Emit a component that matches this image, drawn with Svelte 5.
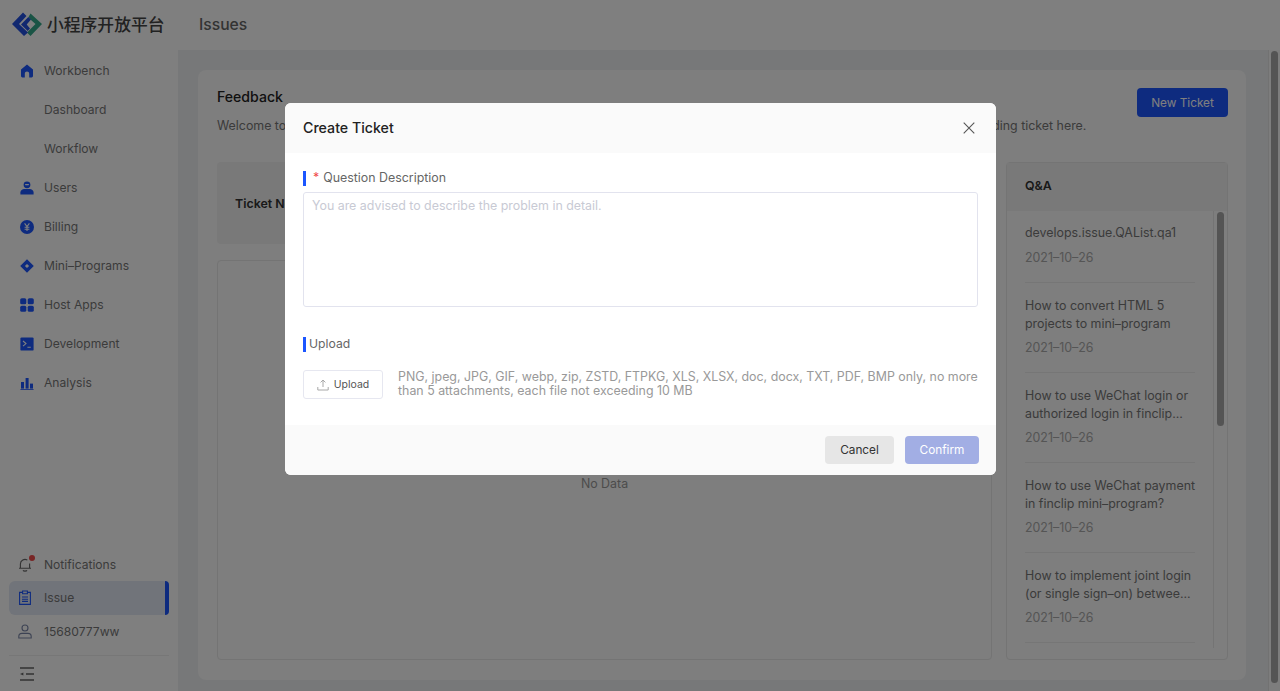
<script>
	const navTop = [
		{ label: 'Workbench', icon: 'home' },
		{ label: 'Dashboard' },
		{ label: 'Workflow' },
		{ label: 'Users', icon: 'user' },
		{ label: 'Billing', icon: 'yen' },
		{ label: 'Mini–Programs', icon: 'diamond' },
		{ label: 'Host Apps', icon: 'grid' },
		{ label: 'Development', icon: 'terminal' },
		{ label: 'Analysis', icon: 'bars' }
	];

	const questions = [
		{ title: 'develops.issue.QAList.qa1', date: '2021–10–26' },
		{ title: 'How to convert HTML 5 projects to mini–program', date: '2021–10–26' },
		{ title: 'How to use WeChat login or authorized login in finclip...', date: '2021–10–26' },
		{ title: 'How to use WeChat payment in finclip mini–program?', date: '2021–10–26' },
		{ title: 'How to implement joint login (or single sign–on) betwee...', date: '2021–10–26' }
	];
</script>

{#snippet navIcon(name)}
	<svg class="nav-icon" viewBox="0 0 14 14" aria-hidden="true">
		{#if name === 'home'}
			<path d="M7 .6 13 5.4V12a1.4 1.4 0 0 1-1.4 1.4H9.2V9.6a2.2 2.2 0 0 0-4.4 0v3.8H2.4A1.4 1.4 0 0 1 1 12V5.4z" />
		{:else if name === 'user'}
			<path d="M7 .4a3.4 3.4 0 0 1 3.4 3.4A3.4 3.4 0 0 1 7 7.2a3.4 3.4 0 0 1-3.4-3.4A3.4 3.4 0 0 1 7 .4z" />
			<path d="M.4 13.6v-2.2C.4 9.4 2.4 8 4.2 8h5.6c1.8 0 3.8 1.4 3.8 3.4v2.2z" />
			<rect x="5" y="3" width="4" height="1.2" rx=".6" class="cut" />
		{:else if name === 'yen'}
			<circle cx="7" cy="7" r="7" />
			<path d="M4.6 3.4 7 6.6l2.4-3.2M4.6 7.2h4.8M4.6 9.2h4.8M7 6.6v4.4" class="cut-line" />
		{:else if name === 'diamond'}
			<path fill-rule="evenodd" d="M7 .2 13.8 7 7 13.8.2 7zM7 4.9 4.9 7 7 9.1 9.1 7z" />
		{:else if name === 'grid'}
			<rect x=".2" y=".2" width="6.1" height="6.1" rx="1.6" />
			<rect x="7.7" y=".2" width="6.1" height="6.1" rx="1.6" />
			<rect x=".2" y="7.7" width="6.1" height="6.1" rx="1.6" />
			<rect x="7.7" y="7.7" width="6.1" height="6.1" rx="1.6" />
		{:else if name === 'terminal'}
			<rect x=".4" y=".4" width="13.2" height="13.2" rx="1.2" />
			<path d="M3 4l3 2.6L3 9.2M7.4 10.2h3.4" class="cut-line" />
		{:else if name === 'bars'}
			<rect x="1" y="6" width="3" height="6.6" />
			<rect x="5.6" y="2" width="3" height="10.6" />
			<rect x="10" y="7.6" width="3" height="5" />
			<rect x=".4" y="13" width="13.2" height=".8" />
		{/if}
	</svg>
{/snippet}

<div class="page">
	<aside class="sidebar">
		<div class="logo">
			<svg width="31" height="26" viewBox="0 0 31 26" aria-hidden="true">
				<path fill="#34a88a" d="M18.5 2.5 30 13 18.5 25l-3.5-3.5 8.5-8.5-4.5-4-2.5-3z" />
				<path fill="#2350e0" d="M0 13 11 1.5 14.5 5 7 13l9 8.5-4 3.5z" />
				<path fill="#2350e0" d="M9 13.5 16.3 6 19 8.5 14.7 13.5l3.3 4-2.3 2.5z" />
			</svg>
			<span class="logo-text">小程序开放平台</span>
		</div>

		<nav class="nav">
			{#each navTop as item}
				<div class="nav-row">
					{#if item.icon}
						{@render navIcon(item.icon)}
					{:else}
						<span class="nav-icon"></span>
					{/if}
					<span>{item.label}</span>
				</div>
			{/each}
		</nav>

		<div class="nav-bottom">
			<div class="nav-row small">
				<span class="bell">
					<svg class="nav-icon line" viewBox="0 0 14 15" aria-hidden="true">
						<path d="M1 11.2h12M2.4 11.2V7a4.6 4.6 0 0 1 7-3.9M11.6 6.6v4.6M5 13.4c.6.9 3.4.9 4 0" />
					</svg>
					<i class="dot"></i>
				</span>
				<span>Notifications</span>
			</div>
			<div class="nav-row small active">
				<svg class="nav-icon line blue" viewBox="0 0 14 15" aria-hidden="true">
					<path d="M4.4 2.4H1.6v12h10.8v-12H9.6M4.6 1h4.8v2.8H4.6zM4 7h6M4 9.2h6M4 11.4h6" />
				</svg>
				<span>Issue</span>
			</div>
			<div class="nav-row small">
				<svg class="nav-icon line slate" viewBox="0 0 14 15" aria-hidden="true">
					<circle cx="7" cy="4" r="3" />
					<path d="M.8 14v-1.6C.8 10.4 2.4 9.4 4 9.4h6c1.6 0 3.2 1 3.2 3V14z" />
				</svg>
				<span>15680777ww</span>
			</div>
			<div class="collapse">
				<svg width="16" height="14" viewBox="0 0 16 14" aria-hidden="true">
					<path d="M1 1h14M7 7h8M1 13h14" stroke="#666" stroke-width="1.5" fill="none" />
					<path d="M1 7 4.4 5.4v3z" fill="#666" />
				</svg>
			</div>
		</div>
	</aside>

	<div class="content">
		<header class="topbar">Issues</header>
		<div class="body">
			<main class="main">
				<section class="card">
					<div class="card-head">
						<div>
							<h2>Feedback</h2>
							<p>Welcome to the Feedback center. If you meet any problems while using the platform, you can submit a ticket and view the corresponding ticket here.</p>
						</div>
						<button class="primary">New Ticket</button>
					</div>
					<div class="columns">
						<div class="tickets">
							<div class="table-head">Ticket No.</div>
							<div class="table-empty">No Data</div>
						</div>
						<div class="qa">
							<div class="qa-head">Q&amp;A</div>
							<div class="qa-list">
								<div class="qa-items">
									{#each questions as q}
										<div class="qa-item">
											<div class="qa-title">{q.title}</div>
											<div class="qa-date">{q.date}</div>
										</div>
									{/each}
								</div>
								<div class="qa-scroll"><span></span></div>
							</div>
						</div>
					</div>
				</section>
			</main>
			<div class="page-scroll"><span></span></div>
		</div>
	</div>

	<div class="overlay"></div>

	<div class="modal">
		<div class="modal-head">
			<span>Create Ticket</span>
			<svg width="12" height="12" viewBox="0 0 12 12" aria-hidden="true">
				<path d="M.7.7l10.6 10.6M11.3.7.7 11.3" stroke="#555" stroke-width="1.1" fill="none" />
			</svg>
		</div>
		<div class="modal-body">
			<div class="field-label first"><i class="mark"></i><b>*</b>Question Description</div>
			<div class="textarea">You are advised to describe the problem in detail.</div>
			<div class="field-label second"><i class="mark"></i>Upload</div>
			<div class="upload-row">
				<button class="upload">
					<svg width="12" height="12" viewBox="0 0 12 12" aria-hidden="true">
						<path d="M6 8V1.2M3.6 3.4 6 1l2.4 2.4M.8 8v3h10.4V8" stroke="#a8a8a8" fill="none" />
					</svg>
					Upload
				</button>
				<p>PNG, jpeg, JPG, GIF, webp, zip, ZSTD, FTPKG, XLS, XLSX, doc, docx, TXT, PDF, BMP only, no more than 5 attachments, each file not exceeding 10 MB</p>
			</div>
		</div>
		<div class="modal-foot">
			<button class="cancel">Cancel</button>
			<button class="confirm">Confirm</button>
		</div>
	</div>
</div>

<style>
	:global(body) {
		margin: 0;
		overflow: hidden;
	}

	.page {
		position: relative;
		display: flex;
		width: 1280px;
		height: 691px;
		overflow: hidden;
		font-family: Inter, 'Noto Sans CJK SC', sans-serif;
		font-size: 12.4px;
		color: #666;
		background: #fff;
	}

	.sidebar {
		width: 178px;
		flex: none;
		display: flex;
		flex-direction: column;
		box-sizing: border-box;
		padding: 0 9px;
	}

	.logo {
		height: 51px;
		flex: none;
		box-sizing: border-box;
		padding-bottom: 3px;
		display: flex;
		align-items: center;
		gap: 4px;
		margin: 0 0 0 3px;
	}

	.logo-text {
		font-family: 'Noto Sans CJK SC', sans-serif;
		font-size: 16.8px;
		font-weight: 500;
		color: #444;
		white-space: nowrap;
	}

	.nav-row {
		height: 39px;
		display: flex;
		align-items: center;
		gap: 10px;
		padding-left: 11px;
		font-size: 12.1px;
		color: #777;
	}

	.nav-row.small {
		height: 33.5px;
		padding-left: 9px;
		gap: 12px;
		position: relative;
	}

	.nav-icon {
		width: 14px;
		height: 14px;
		flex: none;
		fill: #1c56ff;
	}

	.cut {
		fill: #fff;
	}

	.cut-line {
		fill: none;
		stroke: #fff;
		stroke-width: 1.1;
	}

	.nav-icon.line {
		width: 14px;
		height: 15px;
		fill: none;
		stroke: #666;
		stroke-width: 1.1;
	}

	.nav-icon.blue {
		stroke: #1c56ff;
	}

	.nav-icon.slate {
		stroke: #7a86a8;
	}

	.bell {
		position: relative;
		display: flex;
	}

	.dot {
		position: absolute;
		top: -2px;
		right: -3px;
		width: 6px;
		height: 6px;
		border-radius: 50%;
		background: #f04a4a;
	}

	.nav-bottom {
		margin-top: auto;
	}

	.active {
		background: #e3e8f4;
		border-radius: 6px;
	}

	.active::after {
		content: '';
		position: absolute;
		top: 0;
		right: 0;
		bottom: 0;
		width: 4px;
		background: #1c56ff;
		border-radius: 0 4px 4px 0;
	}

	.collapse {
		margin-top: 7px;
		border-top: 1px solid #eee;
		height: 36px;
		display: flex;
		align-items: center;
		padding-left: 10px;
		box-sizing: border-box;
	}

	.content {
		flex: 1;
		display: flex;
		flex-direction: column;
		min-width: 0;
	}

	.topbar {
		height: 50px;
		flex: none;
		display: flex;
		align-items: center;
		padding: 0 0 2px 21px;
		font-size: 15.7px;
		font-weight: 500;
		color: #666;
		box-sizing: border-box;
	}

	.body {
		flex: 1;
		display: flex;
		min-height: 0;
	}

	.main {
		flex: 1;
		min-width: 0;
		background: #eef0f2;
		padding: 20px 22px 11px 20px;
	}

	.page-scroll {
		width: 12px;
		flex: none;
		box-sizing: border-box;
		border-left: 1px solid #e4e4e4;
		background: #fafafa;
		padding: 1px 2px 8px 2px;
		display: flex;
	}

	.page-scroll span {
		flex: 1;
		background: #a8a8a8;
		border-radius: 4px;
	}

	.card {
		height: 100%;
		box-sizing: border-box;
		background: #fcfcfc;
		border-radius: 8px;
		padding: 18px 18px 20px 19px;
		display: flex;
		flex-direction: column;
	}

	.card-head {
		display: flex;
		justify-content: space-between;
		align-items: flex-start;
		height: 74px;
		flex: none;
	}

	.card-head h2 {
		margin: 0;
		font-size: 14.1px;
		line-height: 18px;
		font-weight: 500;
		color: #222;
	}

	.card-head p {
		margin: 11px 0 0;
		line-height: 18px;
		white-space: nowrap;
		color: #777;
	}

	.primary {
		width: 91px;
		height: 29px;
		flex: none;
		border: 0;
		border-radius: 4px;
		background: #1c56ff;
		color: #fff;
		font: inherit;
		font-size: 11.8px;
	}

	.columns {
		flex: 1;
		display: flex;
		gap: 14px;
		min-height: 0;
	}

	.tickets {
		width: 775px;
		flex: none;
		display: flex;
		flex-direction: column;
		gap: 16px;
	}

	.table-head {
		height: 82px;
		flex: none;
		box-sizing: border-box;
		display: flex;
		align-items: center;
		padding-left: 18px;
		background: #f3f3f3;
		border-radius: 4px;
		font-weight: 600;
		color: #333;
	}

	.table-empty {
		flex: 1;
		border: 1px solid #e8e8e8;
		border-radius: 4px;
		box-sizing: border-box;
		display: flex;
		justify-content: center;
		padding-top: 215px;
		color: #999;
	}

	.qa {
		flex: 1;
		min-width: 0;
		border: 1px solid #e8e8e8;
		border-radius: 4px;
		display: flex;
		flex-direction: column;
	}

	.qa-head {
		height: 48px;
		flex: none;
		box-sizing: border-box;
		display: flex;
		align-items: center;
		padding: 0 0 4px 18px;
		background: #f3f3f3;
		font-weight: 600;
		color: #333;
	}

	.qa-list {
		height: 437px;
		flex: none;
		display: flex;
		overflow: hidden;
	}

	.qa-items {
		flex: 1;
		min-width: 0;
		padding: 0 18px;
	}

	.qa-item {
		padding: 14px 0 15px;
		border-bottom: 1px solid #ececec;
	}

	.qa-item:first-child {
		padding-top: 13px;
	}

	.qa-item:first-child .qa-date {
		margin-top: 7px;
	}

	.qa-title {
		margin-right: -6px;
		line-height: 18px;
		color: #777;
	}

	.qa-date {
		margin-top: 6px;
		line-height: 18px;
		color: #aaa;
	}

	.qa-scroll {
		width: 14px;
		flex: none;
		box-sizing: border-box;
		border-left: 1px solid #e8e8e8;
		padding: 1px 3px 0;
	}

	.qa-scroll span {
		display: block;
		height: 214px;
		background: #a8a8a8;
		border-radius: 4px;
	}

	.overlay {
		position: absolute;
		inset: 0;
		background: rgba(0, 0, 0, 0.5);
	}

	.modal {
		position: absolute;
		top: 103px;
		left: 285px;
		width: 711px;
		height: 372px;
		background: #fff;
		border-radius: 6px;
		overflow: hidden;
		display: flex;
		flex-direction: column;
	}

	.modal-head {
		height: 50px;
		flex: none;
		box-sizing: border-box;
		display: flex;
		align-items: center;
		justify-content: space-between;
		padding: 0 21px 1px 18px;
		background: #fafafa;
		font-size: 14.2px;
		font-weight: 500;
		color: #222;
	}

	.modal-body {
		flex: 1;
		padding: 0 18px;
	}

	.field-label {
		display: flex;
		align-items: center;
		color: #666;
		line-height: 16px;
	}

	.field-label.first {
		margin-top: 17px;
	}

	.field-label.second {
		margin-top: 29px;
		font-size: 12.2px;
	}

	.mark {
		width: 3px;
		height: 15px;
		background: #1c56ff;
		margin-right: 3px;
	}

	.field-label b {
		font-weight: 400;
		color: #f04a4a;
		margin: 0 4px;
	}

	.textarea {
		margin-top: 6px;
		height: 115px;
		box-sizing: border-box;
		border: 1px solid #e2e3ee;
		border-radius: 3px;
		padding: 4px 8px;
		line-height: 18px;
		color: #c8cad4;
	}

	.upload-row {
		margin-top: 18px;
		display: flex;
		gap: 15px;
	}

	.upload {
		width: 80px;
		height: 29px;
		flex: none;
		box-sizing: border-box;
		border: 1px solid #e6e7f0;
		border-radius: 3px;
		background: #fff;
		color: #555;
		font: inherit;
		font-size: 10.5px;
		display: flex;
		align-items: center;
		justify-content: center;
		gap: 5px;
	}

	.upload-row p {
		margin: 0;
		line-height: 14px;
		font-size: 12.4px;
		color: #999;
	}

	.modal-foot {
		height: 50px;
		flex: none;
		box-sizing: border-box;
		display: flex;
		align-items: center;
		justify-content: flex-end;
		gap: 11px;
		padding: 0 17px;
		background: #fafafa;
	}

	.modal-foot button {
		height: 28px;
		border: 0;
		border-radius: 4px;
		font: inherit;
		font-size: 11.8px;
	}

	.cancel {
		width: 69px;
		background: #e6e6e6;
		color: #333;
	}

	.confirm {
		width: 74px;
		background: #a2aee4;
		color: #fff;
	}
</style>
